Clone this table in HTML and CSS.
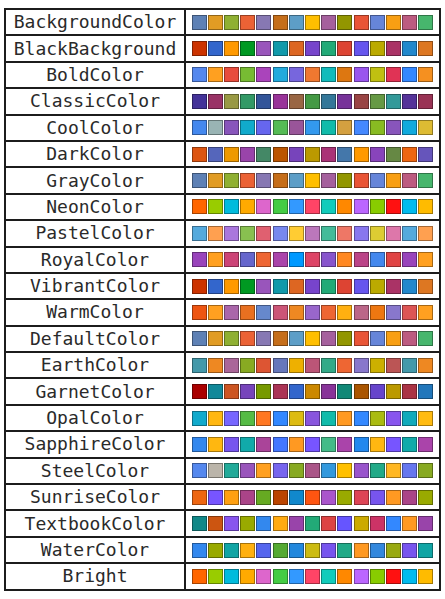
FILE: index.html
```html
<!DOCTYPE html>
<html lang="en">
<head>
  <meta charset="UTF-8" />
  <meta name="viewport" content="width=device-width, initial-scale=1.0"/>
  <title>Color Schemes</title>
  <link rel="stylesheet" href="styles.css">
</head>
<body>

  <table class="schemes">
    <tbody id="schemes"></tbody>
  </table>

  <script>
    const standard = ['#5E81B5','#E19C24','#8FB032','#EB6235','#8778B3','#C56E1A','#5D9EC7','#FFBF00','#A5609D','#929600','#E95536','#6685D9','#F89F13','#BC5B80','#47B66D'];
    const vibrant = ['#CC3300','#3366CC','#FF9900','#009922','#9955BB','#1199AA','#DD6622','#7744CC','#22AA77','#DD4433','#6655EE','#BBAA00','#AA3366','#2288CC','#DD7722'];
    const neon = ['#FF6600','#99CC00','#00BBDD','#FFAA00','#DD66CC','#44CC44','#3399FF','#FF4466','#11CCBB','#FF8800','#BB66FF','#88CC00','#FF1111','#00BBEE','#FFBB00'];

    const schemes = [
      ['BackgroundColor', standard],
      ['BlackBackground', vibrant],
      ['BoldColor', ['#5588EE','#FFA020','#E84C3D','#77BB33','#AA44BB','#22AADD','#7766DD','#F07830','#11BBBB','#DD7711','#9955EE','#C0C011','#E03355','#3388FF','#F59020']],
      ['ClassicColor', ['#443399','#993366','#999944','#339966','#335599','#993399','#996644','#449944','#337799','#773399','#994444','#669944','#339999','#553399','#993355']],
      ['CoolColor', ['#4488EE','#99B4B4','#8855BB','#11AACC','#6666EE','#55BB55','#995599','#3399EE','#11BBAA','#D4A040','#4488FF','#88BB22','#8855BB','#11AADD','#DDBB33']],
      ['DarkColor', ['#DD5511','#5566BB','#EE9900','#9944AA','#448866','#BB5500','#7744BB','#BB9900','#AA3377','#4477AA','#FF9900','#8844BB','#668844','#EE6611','#6655BB']],
      ['GrayColor', standard],
      ['NeonColor', neon],
      ['PastelColor', ['#55AADD','#FFA050','#AA77DD','#88C050','#E06070','#7788EE','#FFCC33','#BB77BB','#44BB99','#EE7766','#8877EE','#DDCC33','#DD77AA','#55AADD','#FFA050']],
      ['RoyalColor', ['#9944BB','#FFA020','#CC4477','#6666CC','#EE6633','#AA44AA','#0099FF','#DD4466','#8855CC','#FF8822','#BB4488','#4488EE','#E04444','#9944BB','#FFA020']],
      ['VibrantColor', vibrant],
      ['WarmColor', ['#EE5511','#FFA020','#AA66AA','#E87020','#6688CC','#CC5577','#EE8822','#9966CC','#EE6633','#FFB010','#BB6688','#EE7711','#8877CC','#DD5555','#FFA020']],
      ['DefaultColor', standard],
      ['EarthColor', ['#4499AA','#EE8822','#AA6699','#88AA22','#DD5533','#6677BB','#EEB000','#BB5577','#33AA88','#EE6633','#8877CC','#CCB000','#BB5555','#4499AA','#EE8822']],
      ['GarnetColor', ['#AA0000','#118899','#CC5522','#7744BB','#779900','#AA3355','#3366CC','#CC8800','#883399','#118877','#AA5500','#6644CC','#BB9900','#AA3344','#2277BB']],
      ['OpalColor', ['#11AACC','#FFB711','#7766FF','#55BB44','#FF7722','#3388FF','#DDBB11','#8855DD','#11BBAA','#FF9922','#3388FF','#AABB11','#8855EE','#11AABB','#FFBB11']],
      ['SapphireColor', ['#3388EE','#FFB710','#7755EE','#11AAAA','#AA4499','#4477FF','#FF9922','#7755FF','#44BB88','#AA44AA','#2288EE','#FFB711','#7755FF','#11AAAA','#AA44AA']],
      ['SteelColor', ['#5588EE','#BBB5AA','#22AA99','#9955BB','#FFA020','#7766EE','#88AA22','#AA5588','#3399DD','#FFC000','#9955CC','#22AA88','#FFB722','#6677EE','#88AA22']],
      ['SunriseColor', ['#EE6611','#7755FF','#FFA010','#AA4488','#66AA22','#BB4400','#1188CC','#FF5511','#AA55CC','#99AA00','#DD4455','#7755EE','#FF9922','#AA4488','#99AA00']],
      ['TextbookColor', ['#118888','#CC5511','#8855EE','#99AA00','#3388EE','#FFAA11','#9944AA','#22AA77','#DD4444','#6655FF','#CCAA00','#CC3366','#3388FF','#FF9922','#9944AA']],
      ['WaterColor', ['#3388EE','#99AA00','#11A5A5','#FFB010','#5566EE','#55AA33','#2288DD','#CCBB11','#7755EE','#22AA88','#FF9922','#3388DD','#99AA11','#7755EE','#11A5A5']],
      ['Bright', neon]
    ];

    const body = document.getElementById('schemes');

    schemes.forEach(([name, colors]) => {
      const row = document.createElement('tr');
      const label = document.createElement('td');
      label.className = 'name';
      label.textContent = name;

      const cell = document.createElement('td');
      cell.className = 'palette';
      const strip = document.createElement('div');
      strip.className = 'swatches';
      colors.forEach(c => {
        const sw = document.createElement('span');
        sw.className = 'swatch';
        sw.style.background = c;
        strip.appendChild(sw);
      });
      cell.appendChild(strip);

      row.appendChild(label);
      row.appendChild(cell);
      body.appendChild(row);
    });
  </script>

</body>
</html>
```

FILE: styles.css
```css
* {
  margin: 0;
  padding: 0;
  box-sizing: border-box;
}

body {
  background: #fff;
  padding: 8px 4px;
  font-family: "DejaVu Sans Mono", "Liberation Mono", monospace;
}

.schemes {
  border-collapse: collapse;
  width: 437px;
}

.schemes td {
  border: 2px solid #1c1c1c;
  height: 26.4px;
  padding: 0;
}

.name {
  width: 180px;
  text-align: center;
  font-size: 18px;
  line-height: 20px;
  color: #2a2a2a;
}

.swatches {
  display: flex;
  justify-content: center;
  gap: 1.2px;
}

.swatch {
  width: 15px;
  height: 15px;
  border: 1px solid rgba(0, 0, 0, 0.35);
}
```
